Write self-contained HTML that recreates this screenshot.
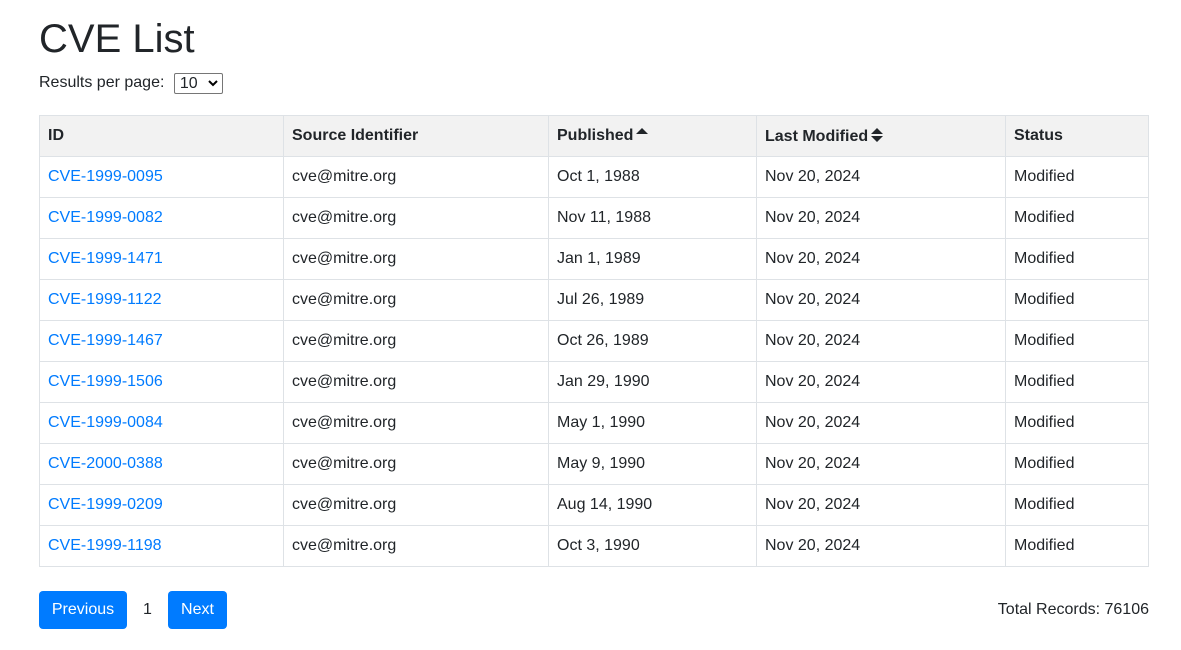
<!DOCTYPE html>
<html><head><style>
body{margin:0;font-family:"Liberation Sans",sans-serif;color:#212529;background:#fff;font-size:16px}
h1{position:absolute;left:39px;top:15px;margin:0;font-size:40px;font-weight:400;line-height:48px}
.rpp{position:absolute;left:39px;top:73px;font-size:16px;line-height:20px}
.sel{display:inline-block;border:1px solid #767676;border-radius:2px;width:49px;height:21px;box-sizing:border-box;margin-left:5px;vertical-align:top;position:relative;font-size:16px;line-height:19px;padding-left:5px}
.sel svg{position:absolute;right:4px;top:6px}
table{position:absolute;left:39px;top:115px;border-collapse:collapse;width:1110px}
td,th{border:1px solid #dee2e6;height:41px;padding:0 8px;text-align:left;box-sizing:border-box}
th{background:#f2f2f2;font-weight:700}
a{color:#007bff;text-decoration:none}
.btn{position:absolute;top:591px;height:38px;background:#007bff;color:#fff;border-radius:4px;line-height:38px;text-align:center}
</style></head><body>
<h1>CVE List</h1>
<div class="rpp">Results per page: <span class="sel">10<svg width="10" height="7" viewBox="0 0 10 7"><path d="M1 1l4 4 4-4" stroke="#000" stroke-width="2" fill="none"/></svg></span></div>
<table>
<tr><th style="width:244px">ID</th><th style="width:265px">Source Identifier</th><th style="width:208px">Published<svg width="12" height="8" viewBox="0 0 12 8" style="vertical-align:5px;margin-left:3px"><path d="M0 7L6 1l6 6z" fill="#212529"/></svg></th><th style="width:249px">Last Modified<svg width="12" height="16" viewBox="0 0 12 16" style="vertical-align:-2px;margin-left:3px"><path d="M0 7L6 1l6 6zM0 9l6 6 6-6z" fill="#212529"/></svg></th><th>Status</th></tr>
<tr><td><a>CVE-1999-0095</a></td><td>cve@mitre.org</td><td>Oct 1, 1988</td><td>Nov 20, 2024</td><td>Modified</td></tr>
<tr><td><a>CVE-1999-0082</a></td><td>cve@mitre.org</td><td>Nov 11, 1988</td><td>Nov 20, 2024</td><td>Modified</td></tr>
<tr><td><a>CVE-1999-1471</a></td><td>cve@mitre.org</td><td>Jan 1, 1989</td><td>Nov 20, 2024</td><td>Modified</td></tr>
<tr><td><a>CVE-1999-1122</a></td><td>cve@mitre.org</td><td>Jul 26, 1989</td><td>Nov 20, 2024</td><td>Modified</td></tr>
<tr><td><a>CVE-1999-1467</a></td><td>cve@mitre.org</td><td>Oct 26, 1989</td><td>Nov 20, 2024</td><td>Modified</td></tr>
<tr><td><a>CVE-1999-1506</a></td><td>cve@mitre.org</td><td>Jan 29, 1990</td><td>Nov 20, 2024</td><td>Modified</td></tr>
<tr><td><a>CVE-1999-0084</a></td><td>cve@mitre.org</td><td>May 1, 1990</td><td>Nov 20, 2024</td><td>Modified</td></tr>
<tr><td><a>CVE-2000-0388</a></td><td>cve@mitre.org</td><td>May 9, 1990</td><td>Nov 20, 2024</td><td>Modified</td></tr>
<tr><td><a>CVE-1999-0209</a></td><td>cve@mitre.org</td><td>Aug 14, 1990</td><td>Nov 20, 2024</td><td>Modified</td></tr>
<tr><td><a>CVE-1999-1198</a></td><td>cve@mitre.org</td><td>Oct 3, 1990</td><td>Nov 20, 2024</td><td>Modified</td></tr>
</table>
<div class="btn" style="left:39px;width:88px">Previous</div>
<div style="position:absolute;left:143px;top:600px;line-height:20px">1</div>
<div class="btn" style="left:168px;width:59px">Next</div>
<div style="position:absolute;right:32px;top:600px;line-height:20px">Total Records: 76106</div>
</body></html>
